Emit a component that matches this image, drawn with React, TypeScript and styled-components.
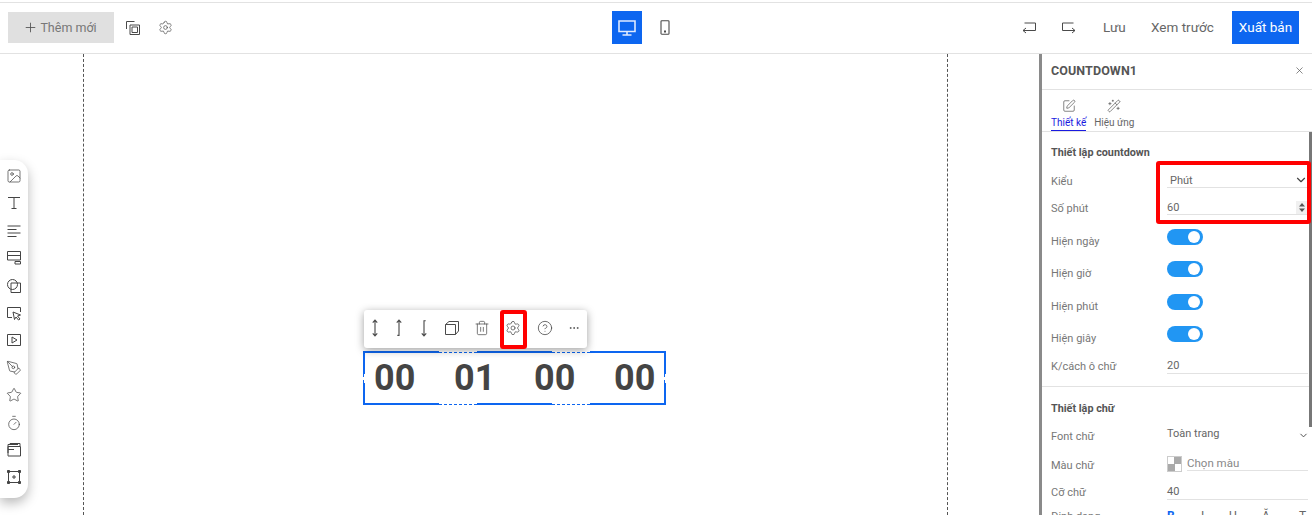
import React from "react";
import styled, { createGlobalStyle } from "styled-components";
import {
  Plus, Settings, X, SquarePen, WandSparkles, ChevronDown,
  PenTool, Star, Timer, Image as ImageIcon, Trash2, CircleHelp, Ellipsis,
} from "lucide-react";

const Global = createGlobalStyle`
  html, body { margin: 0; padding: 0; height: 515px; overflow: hidden; background: #fff; }
  #root { height: 515px; }
  * { box-sizing: border-box; }
  body { font-family: Roboto, "Liberation Sans", sans-serif; color: #555; }
`;

const Page = styled.div`
  height: 515px; display: flex; flex-direction: column; overflow: hidden;
  padding-top: 2px; background: #fff;
`;
const Header = styled.header`
  height: 52px; flex: none; display: flex; align-items: center; justify-content: space-between;
  border-top: 1px solid #e2e2e2; border-bottom: 1px solid #e2e2e2; padding: 0 13px 1px 8px;
  position: relative;
`;
const Group = styled.div`display: flex; align-items: center;`;
const AddButton = styled.button`
  width: 106px; height: 31px; border: 0; background: #e0e0e0; color: #777; font: 400 12.5px Roboto, sans-serif;
  display: flex; align-items: center; justify-content: center; gap: 2px; padding: 0 2px 0 0;
  svg { color: #555; }
`;
const IconSlot = styled.span<{ $w?: number }>`
  width: ${(p) => p.$w ?? 32}px; height: 24px; display: inline-flex; align-items: center; justify-content: center;
  color: #4a4a4a; flex: none;
`;
const DeviceGroup = styled.div`
  position: absolute; left: 612px; top: 8px; display: flex; align-items: center; gap: 7px;
`;
const DeviceButton = styled.button`
  width: 30px; height: 33px; border: 0; padding: 0; background: #0d66f0; color: #dfeaff;
  display: flex; align-items: center; justify-content: center;
`;
const TextAction = styled.span<{ $w: number }>`
  width: ${(p) => p.$w}px; text-align: center; font-size: 13.5px; color: #666; white-space: nowrap; margin-bottom: 2px;
`;
const Publish = styled.button`
  width: 67px; height: 33px; border: 0; padding: 0 0 2px; background: #0d66f0; color: #fff;
  font: 400 13.5px Roboto, sans-serif;
`;
const Main = styled.div`flex: 1; display: flex; min-height: 0;`;
const Canvas = styled.div`flex: 1; position: relative; overflow: hidden;`;
const PageFrame = styled.div`
  margin-left: 83px; width: 865px; height: 100%;
  border-left: 1px dashed #555; border-right: 1px dashed #555;
`;
const SideTools = styled.div`
  position: absolute; left: 0; top: 106px; width: 28px; height: 338px; background: #fff;
  border-radius: 0 14px 14px 0; box-shadow: 0 5px 12px rgba(0,0,0,.28);
  display: flex; flex-direction: column; align-items: center; padding-top: 8px; gap: 11.4px;
  color: #444;
  svg { display: block; margin-left: -1px; flex: none; }
`;
const FloatBar = styled.div`
  position: absolute; left: 364px; top: 256px; width: 223px; height: 38px; background: #fff;
  border-radius: 3px; box-shadow: 0 2px 8px rgba(0,0,0,.38); z-index: 2;
  display: flex; align-items: center;
`;
const FloatBtn = styled.span<{ $w: number }>`
  width: ${(p) => p.$w}px; height: 36px; margin-bottom: 2px; display: flex; align-items: center; justify-content: center; color: #4a4a4a; flex: none;
`;
const GearMark = styled.div`
  position: absolute; left: 136px; top: 0; width: 27px; height: 39px; border: 4px solid #f00; border-radius: 3px;
`;
const Selected = styled.div`
  position: absolute; left: 363px; top: 297px; width: 303px; height: 54px;
  display: flex; align-items: center; padding-left: 11px;
`;
const Digit = styled.span`
  width: 80px; flex: none; font: 700 36px/1 Roboto, sans-serif; color: #444;
`;
const HEdge = styled.div<{ $pos: string }>`
  position: absolute; left: 0; right: 0; height: 2px; ${(p) => p.$pos}: 0; display: flex;
`;
const VEdge = styled.div<{ $pos: string }>`
  position: absolute; top: 0; bottom: 0; width: 2px; ${(p) => p.$pos}: 0; display: flex; flex-direction: column;
`;
const Solid = styled.span<{ $size: number }>`
  flex: ${(p) => (p.$size ? `0 0 ${p.$size}px` : "1")}; background: #0d66f0;
`;
const Dash = styled.span<{ $size: number; $v?: boolean }>`
  flex: 0 0 ${(p) => p.$size}px;
  ${(p) => (p.$v ? "border-left: 1px dashed #0d66f0;" : "border-top: 1px dashed #0d66f0; margin-top: 1px;")}
`;

const Panel = styled.aside`
  width: 273px; flex: none; border-left: 3px solid #8a8a8a; background: #fff; position: relative; overflow: hidden; z-index: 3;
`;
const PanelTitle = styled.div`
  height: 36px; display: flex; align-items: center; justify-content: space-between; padding: 0 7px 2px 9px;
  border-bottom: 1px solid #e2e2e2; font: 700 12.5px Roboto, sans-serif; color: #555; letter-spacing: .1px;
`;
const Tabs = styled.div`
  height: 42px; border-bottom: 1px solid #e2e2e2; display: flex; padding-left: 9px; gap: 8px;
`;
const Tab = styled.div<{ $active?: boolean }>`
  height: 41px; display: flex; flex-direction: column; align-items: center; padding-top: 9px;
  font-size: 10px; line-height: 12px; gap: 4px; color: ${(p) => (p.$active ? "#1a1ae0" : "#666")};
  border-bottom: ${(p) => (p.$active ? "1px solid #1a1ae0" : "1px solid transparent")};
  svg { color: #444; display: block; }
`;
const Scroll = styled.div`
  position: absolute; right: 0; top: 78px; width: 3px; height: 295px; background: #777;
`;
const SectionTitle = styled.div<{ $top: number }>`
  margin: ${(p) => p.$top + 1}px 0 9px; padding-left: 9px; height: 20px;
  font: 700 10.8px/20px Roboto, sans-serif; color: #555;
`;
const Row = styled.div<{ $h: number }>`
  height: ${(p) => p.$h}px; display: grid; grid-template-columns: 116px 141px; padding-left: 9px; align-items: start;
`;
const Label = styled.div<{ $top?: number }>`
  font-size: 11px; line-height: 16px; color: #777; margin-top: ${(p) => p.$top ?? 2}px; white-space: nowrap;
`;
const Field = styled.div<{ $indent?: number; $plain?: boolean; $low?: boolean }>`
  height: 16px; font-size: 11px; line-height: 15px; color: #666; position: relative;
  padding-left: ${(p) => p.$indent ?? 0}px;
  padding-top: ${(p) => (p.$low ? 1 : 0)}px;
  margin-top: ${(p) => (p.$plain ? -3 : 0)}px;
  display: flex; align-items: center; justify-content: space-between;
  border-bottom: ${(p) => (p.$plain ? "0" : "1px solid #e2e2e2")};
`;
const Spinner = styled.span`
  width: 12px; height: 13px; background: #f0f0f0; display: flex; align-items: center; justify-content: center;
`;
const Toggle = styled.span`
  width: 36px; height: 16px; border-radius: 8px; background: #2196f3; display: block; position: relative;
  &::after { content: ""; position: absolute; right: 3px; top: 2px; width: 12px; height: 12px; border-radius: 50%; background: #fff; }
`;
const Divider = styled.div`height: 1px; background: #e2e2e2;`;
const ColorRow = styled.div`display: flex; align-items: flex-start; gap: 5px; margin-top: -1px;`;
const Swatch = styled.span`
  width: 15px; height: 16px; flex: none; border: 1px solid #ccc;
  background: conic-gradient(#aaa 0 25%, #fff 0 50%, #aaa 0 75%, #fff 0);
`;
const ColorField = styled.div`
  flex: 1; height: 15px; border-bottom: 1px solid #e2e2e2; font-size: 11.5px; line-height: 14px; color: #888;
`;
const FormatRow = styled.div`display: flex; font-size: 12px; line-height: 14px; color: #666;`;
const FormatMark = styled.span<{ $on?: boolean; $w: number }>`
  width: ${(p) => p.$w}px; color: ${(p) => (p.$on ? "#0d66f0" : "#666")}; font-weight: ${(p) => (p.$on ? 700 : 400)};
`;
const RedBox = styled.div`
  position: absolute; left: 114px; top: 107px; width: 155px; height: 63px; border: 4px solid #f00; border-radius: 3px; z-index: 4;
`;

const Ico: React.FC<{ s?: number; w?: number; children: React.ReactNode }> = ({ s = 16, w = 1, children }) => (
  <svg width={s} height={s} viewBox="0 0 16 16" fill="none" stroke="currentColor" strokeWidth={w}>{children}</svg>
);

const toolsProps = { size: 16, strokeWidth: 1.1 };

export default function App() {
  return (
    <Page>
      <Global />
      <Header>
        <Group>
          <AddButton><Plus size={15} strokeWidth={1.4} />Thêm mới</AddButton>
          <IconSlot $w={38}>
            <Ico><path d="M9.5 1.5h-8V9M5 5h9.5v9.5H5zM7 7h5.5v5.5H7z" /></Ico>
          </IconSlot>
          <IconSlot $w={26}><Settings size={15} strokeWidth={1.1} /></IconSlot>
        </Group>
        <DeviceGroup>
          <DeviceButton>
            <svg width="20" height="18" viewBox="0 0 20 18" fill="none" stroke="currentColor" strokeWidth="1.6">
              <path d="M2 2h16v10.5H2zM10 12.5V16M5.5 16h9" />
            </svg>
          </DeviceButton>
          <IconSlot $w={32}>
            <svg width="10" height="15" viewBox="0 0 10 15" fill="none" stroke="currentColor" strokeWidth="1.1">
              <rect x="1" y=".8" width="8" height="13.4" rx=".8" />
              <rect x="4" y="10.5" width="2" height="2" fill="currentColor" stroke="none" />
            </svg>
          </IconSlot>
        </DeviceGroup>
        <Group>
          <IconSlot $w={40}>
            <Ico><path d="M14.5 3H3.5M14.5 3v7.5H2M5 8 2 10.5 5 13" /></Ico>
          </IconSlot>
          <IconSlot $w={40}>
            <Ico><path d="M1.5 3h11M1.5 3v7.5H14M11 8l3 2.5L11 13" /></Ico>
          </IconSlot>
          <IconSlot $w={14} />
          <TextAction $w={22}>Lưu</TextAction>
          <IconSlot $w={26} />
          <TextAction $w={62}>Xem trước</TextAction>
          <IconSlot $w={19} />
          <Publish>Xuất bản</Publish>
        </Group>
      </Header>
      <Main>
        <Canvas>
          <PageFrame />
          <SideTools>
            <ImageIcon {...toolsProps} />
            <Ico><path d="M2 2.5h12M8 2.5v11M5.5 13.5h5" /></Ico>
            <Ico><path d="M1.5 3h13M1.5 6.5h9M1.5 10h13M1.5 13.5h9" /></Ico>
            <Ico><path d="M1.5 1.5h13v8.5h-13zM1.5 5.5h13M9 11.5h5.5v2.5H9z" /></Ico>
            <Ico><circle cx="6.5" cy="6.5" r="5" /><path d="M5 5h9.5v9.5H5z" /></Ico>
            <Ico><path d="M6 12.5H1.5v-10h13V7" /><path d="M7 7l7.5 3-3 1 2.5 3-1.5 1-2.5-3-1.5 2.5z" /></Ico>
            <Ico><path d="M1.5 2.5h13v11h-13zM6 5l5 3-5 3z" /></Ico>
            <PenTool {...toolsProps} />
            <Star {...toolsProps} />
            <Timer {...toolsProps} />
            <Ico><path d="M2 11V2.5h10M4 3V1.5h10V4M2 13.5V4.5h12.5v9.5H2zM2 7.5h6" /></Ico>
            <Ico><path d="M2.5 2.5h11v11h-11zM8 6v4M6 8h4" /><path d="M1.5 1.5h2v2h-2zM12.5 1.5h2v2h-2zM1.5 12.5h2v2h-2zM12.5 12.5h2v2h-2z" fill="currentColor" /></Ico>
          </SideTools>
          <FloatBar>
            <FloatBtn $w={22}><Ico s={18} w={1}><path d="M8 1v14M6 3.2 8 1l2 2.2M6 12.8 8 15l2-2.2" /></Ico></FloatBtn>
            <FloatBtn $w={26}><Ico s={18} w={1}><path d="M8 1v13.5H6.5M6 3.2 8 1l2 2.2" /></Ico></FloatBtn>
            <FloatBtn $w={24}><Ico s={18} w={1}><path d="M8 15V1.5H9.5M6 12.8 8 15l2-2.2" /></Ico></FloatBtn>
            <FloatBtn $w={32}>
              <Ico><path d="M5 1.5h9.5V11M1.5 4.5H11.5v10H1.5zM1.5 4.5 5 1.5M11.5 14.5 14.5 11" /></Ico>
            </FloatBtn>
            <FloatBtn $w={28}><Trash2 size={16} strokeWidth={1.1} /></FloatBtn>
            <FloatBtn $w={34}><Settings size={16} strokeWidth={1.1} /></FloatBtn>
            <FloatBtn $w={30}><CircleHelp size={16} strokeWidth={1.2} /></FloatBtn>
            <FloatBtn $w={27}><Ellipsis size={12} strokeWidth={1.6} /></FloatBtn>
            <GearMark />
          </FloatBar>
          <Selected>
            <Digit>00</Digit><Digit>01</Digit><Digit>00</Digit><Digit>00</Digit>
            <HEdge $pos="top">
              <Solid $size={76} /><Dash $size={38} /><Solid $size={75} /><Dash $size={38} /><Solid $size={0} />
            </HEdge>
            <HEdge $pos="bottom">
              <Solid $size={76} /><Dash $size={38} /><Solid $size={75} /><Dash $size={38} /><Solid $size={0} />
            </HEdge>
            <VEdge $pos="left">
              <Solid $size={23} /><Dash $v $size={9} /><Solid $size={0} />
            </VEdge>
            <VEdge $pos="right">
              <Solid $size={23} /><Dash $v $size={9} /><Solid $size={0} />
            </VEdge>
          </Selected>
        </Canvas>
        <Panel>
          <PanelTitle>COUNTDOWN1<X size={11} strokeWidth={1.5} /></PanelTitle>
          <Tabs>
            <Tab $active><SquarePen size={14} strokeWidth={1.1} />Thiết kế</Tab>
            <Tab><WandSparkles size={14} strokeWidth={1.1} />Hiệu ứng</Tab>
          </Tabs>
          <Scroll />
          <SectionTitle $top={10}>Thiết lập countdown</SectionTitle>
          <Row $h={27}>
            <Label>Kiểu</Label>
            <Field $indent={3} $low>Phút<ChevronDown size={14} strokeWidth={2} color="#444" /></Field>
          </Row>
          <Row $h={30}>
            <Label>Số phút</Label>
            <Field $low>60
              <Spinner>
                <svg width="6" height="9" viewBox="0 0 6 9"><path d="M3 0l3 3.5H0zM3 9l3-3.5H0z" fill="#555" /></svg>
              </Spinner>
            </Field>
          </Row>
          <Row $h={32}><Label $top={5}>Hiện ngày</Label><Toggle /></Row>
          <Row $h={33}><Label $top={5}>Hiện giờ</Label><Toggle /></Row>
          <Row $h={32}><Label $top={5}>Hiện phút</Label><Toggle /></Row>
          <Row $h={32}><Label $top={5}>Hiện giây</Label><Toggle /></Row>
          <Row $h={28}><Label $top={1}>K/cách ô chữ</Label><Field>20</Field></Row>
          <Divider />
          <SectionTitle $top={11}>Thiết lập chữ</SectionTitle>
          <Row $h={29}>
            <Label $top={1}>Font chữ</Label>
            <Field $plain>Toàn trang<ChevronDown size={11} strokeWidth={2} color="#444" style={{ marginTop: 4, marginRight: -1 }} /></Field>
          </Row>
          <Row $h={27}>
            <Label $top={1}>Màu chữ</Label>
            <ColorRow><Swatch /><ColorField>Chọn màu</ColorField></ColorRow>
          </Row>
          <Row $h={25}><Label $top={1}>Cỡ chữ</Label><Field>40</Field></Row>
          <Row $h={16}>
            <Label $top={0}>Định dạng</Label>
            <FormatRow>
              <FormatMark $on $w={34}>B</FormatMark><FormatMark $w={28}>I</FormatMark><FormatMark $w={33}>U</FormatMark><FormatMark $w={37}>Ă</FormatMark><FormatMark $w={9}>T</FormatMark>
            </FormatRow>
          </Row>
          <RedBox />
        </Panel>
      </Main>
    </Page>
  );
}
